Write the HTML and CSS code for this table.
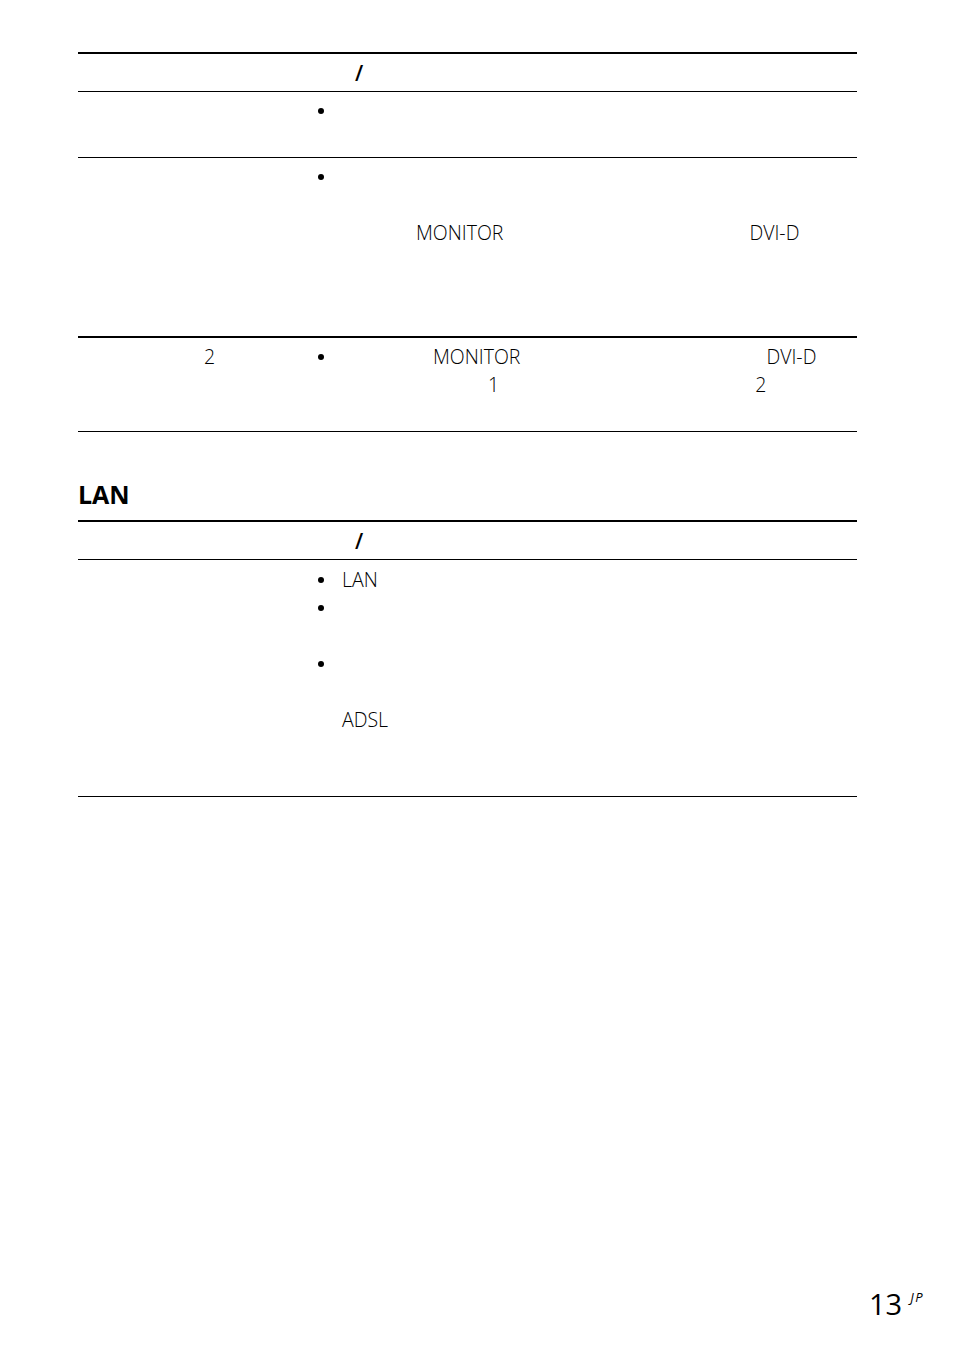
FILE: index.html
```html
<!DOCTYPE html>
<html lang="ja">
<head>
<meta charset="utf-8">
<title>13 JP</title>
<link rel="stylesheet" href="styles.css">
</head>
<body>
<div class="page">
  <section class="tbl first">
    <div class="hdr"><div class="c1"></div><div class="c2"><span class="slash">/</span></div></div>
    <div class="row r1">
      <div class="c1"></div>
      <div class="c2">
        <div class="ln bl"><span class="dot"></span></div>
        <div class="ln"></div>
      </div>
    </div>
    <div class="row r2">
      <div class="c1"></div>
      <div class="c2">
        <div class="ln bl"><span class="dot"></span></div>
        <div class="ln"></div>
        <div class="ln tx"><span class="mon1">MONITOR</span><span class="dvi1">DVI-D</span></div>
        <div class="ln"></div>
        <div class="ln"></div>
        <div class="ln"></div>
      </div>
    </div>
    <div class="row r3">
      <div class="c1"><div class="ln"><span class="two">2</span></div></div>
      <div class="c2">
        <div class="ln bl"><span class="dot"></span><span class="mon2">MONITOR</span><span class="dvi2">DVI-D</span></div>
        <div class="ln tx"><span class="one">1</span><span class="twob">2</span></div>
        <div class="ln"></div>
      </div>
    </div>
  </section>

  <h2 class="heading">LAN</h2>
  <section class="tbl">
    <div class="hdr"><div class="c1"></div><div class="c2"><span class="slash">/</span></div></div>
    <div class="row r4">
      <div class="c1"></div>
      <div class="c2">
        <div class="ln bl"><span class="dot"></span><span>LAN</span></div>
        <div class="ln bl"><span class="dot"></span></div>
        <div class="ln"></div>
        <div class="ln bl"><span class="dot"></span></div>
        <div class="ln"></div>
        <div class="ln tx"><span>ADSL</span></div>
        <div class="ln"></div>
        <div class="ln"></div>
      </div>
    </div>
  </section>
</div>
<footer class="pno"><span class="num">13</span><span class="jp">JP</span></footer>
</body>
</html>
```
FILE: styles.css
```css
html, body {
  margin: 0;
  padding: 0;
  background: #fff;
}
body {
  width: 954px;
  height: 1354px;
  position: relative;
  font-family: "Open Sans", "Noto Sans CJK JP", sans-serif;
  font-weight: 300;
  font-size: 19.5px;
  color: #000;
}
.page {
  padding: 52px 0 0 78px;
  width: 779px;
}
.tbl {
  border-top: 2px solid #000;
}
.hdr {
  display: grid;
  grid-template-columns: 232px 1fr;
  height: 37px;
  border-bottom: 1px solid #000;
  align-items: center;
}
.slash {
  margin-left: 45px;
  font-weight: 600;
  font-size: 21px;
}
.row {
  display: grid;
  grid-template-columns: 232px 1fr;
  padding: 5px 0 4px;
  border-bottom: 1px solid #000;
}
.r2 { padding-bottom: 5px; border-bottom: 2px solid #000; }
.r3 { padding: 5px 0 4px; }
.r4 { padding: 6px 0 6px; }
.ln {
  height: 28px;
  line-height: 28px;
  display: flex;
  align-items: center;
  white-space: nowrap;
}
.bl .dot {
  width: 6px;
  height: 6px;
  border-radius: 50%;
  background: #000;
  margin: 0 18px 0 8px;
  flex: none;
}
.tx { padding-left: 32px; }
.mon1 { margin-left: 74px; }
.dvi1 { margin-left: 246px; }
.mon2 { margin-left: 91px; }
.dvi2 { margin-left: 246px; }
.two { margin-left: 126px; }
.one { margin-left: 146px; }
.twob { margin-left: 256px; }
.heading {
  margin: 47px 0 0;
  height: 41px;
  font-family: "Open Sans", sans-serif;
  font-weight: 700;
  font-size: 25px;
  line-height: 30px;
}
.pno {
  position: absolute;
  left: 869px;
  top: 1286px;
  display: flex;
  align-items: flex-start;
}
.num {
  font-size: 29px;
  line-height: 36px;
  font-weight: 400;
}
.jp {
  font-size: 13px;
  font-weight: 400;
  font-style: italic;
  letter-spacing: 1.5px;
  margin-left: 8px;
  line-height: 16px;
  margin-top: 3px;
}
```
